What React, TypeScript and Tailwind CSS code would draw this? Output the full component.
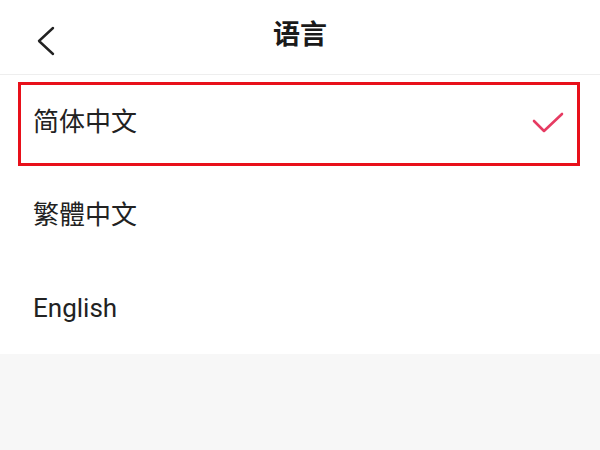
import React from "react";

const font = { fontFamily: 'Roboto, "Noto Sans CJK SC", sans-serif' };

export default function App() {
  const rows = ["简体中文", "繁體中文", "English"];
  return (
    <div className="w-[600px] h-[450px] bg-[#f7f7f7] flex flex-col" style={font}>
      <div className="h-[75px] bg-white border-b border-[#eeeeee] flex items-center relative shrink-0">
        <div className="absolute left-[36px] top-[26px]">
          <svg width="20" height="30" viewBox="0 0 20 30" fill="none">
            <path d="M17 2 L3 15 L17 28" stroke="#222" strokeWidth="2.4" strokeLinecap="round" strokeLinejoin="round" />
          </svg>
        </div>
        <div className="flex-1 text-center text-[27px] font-bold text-[#1a1a1a] leading-none -mt-[3px]">语言</div>
      </div>
      <div className="bg-white relative">
        {rows.map((r, i) => (
          <div key={r} className="h-[93px] flex items-center justify-between pl-[33px] pr-[36px]">
            <span className="text-[26px] text-[#222] leading-none">{r}</span>
            {i === 0 && (
              <svg width="32" height="22" viewBox="0 0 32 22" fill="none" className="mt-[2px]">
                <path d="M2 9 L12 19 L30 2" stroke="#e63b62" strokeWidth="2.6" strokeLinecap="round" strokeLinejoin="round" />
              </svg>
            )}
          </div>
        ))}
        <div className="absolute left-[18px] top-[7px] w-[562px] h-[84px] border-[3px] border-[#e8101a]" />
      </div>
    </div>
  );
}
